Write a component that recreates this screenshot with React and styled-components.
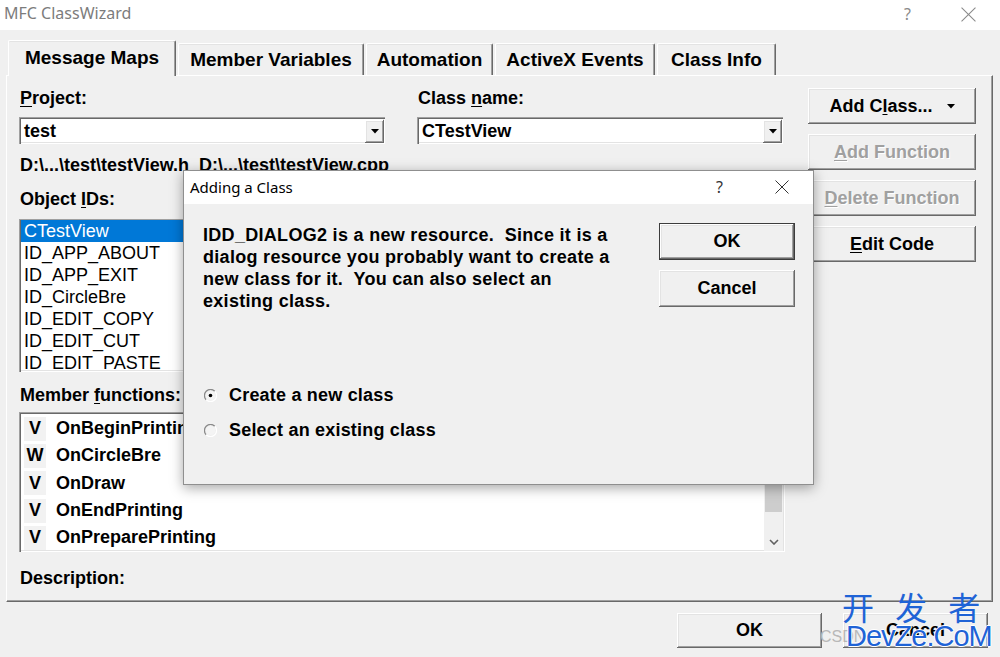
import React from "react";
import styled, { createGlobalStyle } from "styled-components";

const GlobalStyle = createGlobalStyle`
  html, body {
    margin: 0;
    padding: 0;
    background: #f0f0f0;
  }
  body {
    font-family: "Liberation Sans", Arial, sans-serif;
  }
  * {
    box-sizing: border-box;
  }
`;

const Window = styled.div`
  position: relative;
  width: 1000px;
  height: 657px;
  overflow: hidden;
  background: #f0f0f0;
  font-family: "Liberation Sans", Arial, sans-serif;
  color: #000;
`;

const TitleBar = styled.div`
  height: 30px;
  background: #fff;
  display: flex;
  align-items: flex-start;
  padding: 2px 0 0 4px;
  font-family: "Noto Sans", sans-serif;
  font-size: 16px;
  color: #7c7c7c;
`;

const Caption = styled.div`
  flex: 1;
  line-height: 22px;
`;

const CaptionButtons = styled.div`
  display: flex;
  align-items: center;
  gap: ${(p) => p.$gap}px;
  padding-right: ${(p) => p.$right}px;
  height: ${(p) => p.$height}px;
  color: ${(p) => p.$color};
  font-family: "Noto Sans", sans-serif;
  font-size: 16px;
`;

const TabStrip = styled.div`
  position: relative;
  z-index: 2;
  display: flex;
  align-items: flex-end;
  height: 46px;
  padding: 10px 0 0 8px;
`;

const Tab = styled.div`
  height: ${(p) => (p.$active ? 36 : 32)}px;
  margin-bottom: ${(p) => (p.$active ? 0 : 1)}px;
  margin-right: 2px;
  width: ${(p) => p.$width}px;
  display: flex;
  align-items: center;
  justify-content: center;
  padding-bottom: ${(p) => (p.$active ? 1 : 0)}px;
  background: #f0f0f0;
  border-top: 1px solid #fff;
  border-left: 1px solid #fff;
  border-right: 1px solid #696969;
  box-shadow: inset -1px 0 #a0a0a0, inset 0 1px #e3e3e3;
  border-radius: 2px 2px 0 0;
  font-weight: bold;
  font-size: 19px;
  white-space: nowrap;
`;

const Panel = styled.div`
  position: relative;
  z-index: 1;
  display: flex;
  gap: 23px;
  margin: -1px 7px 0 6px;
  padding: 12px 16px 13px 12px;
  border-top: 1px solid #fff;
  border-left: 1px solid #fff;
  border-right: 1px solid #696969;
  border-bottom: 1px solid #696969;
  box-shadow: inset -1px -1px #a0a0a0;
`;

const LeftSection = styled.div`
  width: 766px;
  display: flex;
  flex-direction: column;
`;

const FieldRow = styled.div`
  display: flex;
  gap: 32px;
`;

const Field = styled.div`
  width: 366px;
  display: flex;
  flex-direction: column;
`;

const Label = styled.div`
  font-weight: bold;
  font-size: 18px;
  line-height: 20px;
  min-height: 20px;
  padding-left: 1px;
  margin-top: ${(p) => p.$top || 0}px;
  margin-bottom: ${(p) => p.$bottom || 0}px;
  white-space: nowrap;
`;

const Key = styled.span`
  text-decoration: underline;
  text-underline-offset: 2px;
`;

const Combo = styled.div`
  height: 27px;
  display: flex;
  align-items: center;
  background: #fff;
  padding: 2px 1px 1px 2px;
  box-shadow: inset 1px 1px #a0a0a0, inset 2px 2px #696969, inset -1px -1px #fff,
    inset -2px -2px #e3e3e3;
`;

const ComboText = styled.div`
  flex: 1;
  padding-left: 3px;
  font-weight: bold;
  font-size: 18px;
`;

const ComboButton = styled.div`
  width: 19px;
  height: 23px;
  display: flex;
  align-items: center;
  justify-content: center;
  background: #f0f0f0;
  box-shadow: inset -1px -1px #696969, inset 1px 1px #fff, inset -2px -2px #a0a0a0,
    inset 2px 2px #e3e3e3;
`;

const PathText = styled.div`
  margin-top: 11px;
  font-weight: bold;
  font-size: 18px;
  line-height: 20px;
  padding-left: 1px;
  white-space: pre;
`;

const ListRow = styled.div`
  display: flex;
  gap: 32px;
  margin-top: 14px;
`;

const ListBox = styled.div`
  height: ${(p) => p.$height}px;
  background: #fff;
  padding: 1px 2px 1px 2px;
  overflow: hidden;
  display: flex;
  box-shadow: inset 1px 1px #a0a0a0, inset 2px 2px #696969, inset -1px -1px #fff,
    inset -2px -2px #e3e3e3;
`;

const ListItems = styled.div`
  flex: 1;
  display: flex;
  flex-direction: column;
  padding-top: ${(p) => p.$top || 0}px;
`;

const IdItem = styled.div`
  height: 22px;
  line-height: 22px;
  padding-left: 3px;
  font-size: 18px;
  white-space: nowrap;
  background: ${(p) => (p.$selected ? "#0078d7" : "transparent")};
  color: ${(p) => (p.$selected ? "#fff" : "#000")};
`;

const FuncItem = styled.div`
  height: 27.3px;
  flex-shrink: 0;
  display: flex;
  align-items: center;
  font-weight: bold;
  font-size: 18px;
  white-space: nowrap;
`;

const FuncKind = styled.span`
  width: 22px;
  height: 24px;
  margin: 0 10px 0 3px;
  display: flex;
  align-items: center;
  justify-content: center;
  background: #f2f2f2;
`;

const ScrollBar = styled.div`
  width: 19px;
  display: flex;
  flex-direction: column;
  background: #f0f0f0;
`;

const ScrollArrow = styled.div`
  height: 19px;
  display: flex;
  align-items: center;
  justify-content: center;
`;

const ScrollThumb = styled.div`
  height: 80px;
  margin: 0 1px;
  background: #cdcdcd;
`;

const ScrollTrack = styled.div`
  flex: 1;
`;

const ButtonColumn = styled.div`
  width: 168px;
  display: flex;
  flex-direction: column;
  gap: 10px;
`;

const Button = styled.div`
  width: ${(p) => p.$width || 168}px;
  height: ${(p) => p.$height || 36}px;
  display: flex;
  align-items: center;
  justify-content: center;
  gap: 14px;
  background: #f0f0f0;
  font-weight: bold;
  font-size: 18px;
  white-space: nowrap;
  color: ${(p) => (p.$disabled ? "#a0a0a0" : "#000")};
  text-shadow: ${(p) => (p.$disabled ? "1px 1px 0 #fff" : "none")};
  border: ${(p) => (p.$default ? "1px solid #3c3c3c" : "none")};
  box-shadow: inset -1px -1px #696969, inset 1px 1px #fff, inset -2px -2px #a0a0a0,
    inset 2px 2px #e3e3e3;
`;

const BottomRow = styled.div`
  display: flex;
  justify-content: flex-end;
  gap: 21px;
  margin-top: 11px;
  padding-right: 12px;
`;

const Dialog = styled.div`
  position: absolute;
  left: 183px;
  top: 170px;
  width: 631px;
  height: 315px;
  z-index: 5;
  background: #f0f0f0;
  border: 1px solid #8f8f8f;
  box-shadow: 0 3px 12px rgba(0, 0, 0, 0.35);
  display: flex;
  flex-direction: column;
`;

const DialogTitle = styled.div`
  height: 33px;
  background: #fff;
  display: flex;
  align-items: center;
  padding: 0 0 2px 6px;
  font-family: "Noto Sans", sans-serif;
  font-size: 15px;
  color: #000;
`;

const DialogBody = styled.div`
  padding: 19px 18px 0 19px;
  display: flex;
  flex-direction: column;
`;

const DialogTop = styled.div`
  display: flex;
  justify-content: space-between;
`;

const Message = styled.div`
  margin-top: 1px;
  font-weight: bold;
  font-size: 18px;
  letter-spacing: 0.3px;
  line-height: 22px;
  white-space: pre;
`;

const DialogButtons = styled.div`
  display: flex;
  flex-direction: column;
  gap: 10px;
`;

const RadioGroup = styled.div`
  margin-top: 72px;
  display: flex;
  flex-direction: column;
  gap: 13px;
`;

const Radio = styled.div`
  height: 22px;
  display: flex;
  align-items: center;
  gap: 12px;
  padding-left: 1px;
  font-weight: bold;
  font-size: 18px;
  letter-spacing: 0.2px;
`;

const Watermark = styled.div`
  position: absolute;
  left: 842px;
  top: 588px;
  width: 158px;
  z-index: 6;
  display: flex;
  flex-direction: column;
  align-items: flex-start;
  color: #1f63d6;
  white-space: pre;
  pointer-events: none;
`;

const WatermarkCjk = styled.div`
  font-family: "Noto Sans CJK SC", sans-serif;
  font-size: 32px;
  line-height: 36px;
  letter-spacing: 7px;
`;

const WatermarkLatin = styled.div`
  margin-top: -4px;
  padding-left: 4px;
  font-family: "Liberation Sans", sans-serif;
  font-size: 29px;
  line-height: 32px;
  letter-spacing: -1px;
  text-shadow: 1px 0 #fff, -1px 0 #fff, 0 1px #fff, 0 -1px #fff;
`;

const Faint = styled.div`
  position: absolute;
  left: 820px;
  top: 628px;
  z-index: 6;
  font-size: 16px;
  color: #b8b8b8;
`;

const DownTriangle = () => (
  <svg width="8" height="5" viewBox="0 0 8 5">
    <path d="M0 0 H8 L4 4.5 Z" fill="#000" />
  </svg>
);

const CloseGlyph = ({ size, color }) => (
  <svg width={size} height={size} viewBox="0 0 14 14">
    <path d="M0.5 0.5 L13.5 13.5 M13.5 0.5 L0.5 13.5" stroke={color} strokeWidth="1" />
  </svg>
);

const RadioMark = ({ checked }) => (
  <svg width="13" height="13" viewBox="0 0 13 13">
    <path d="M10.8 2.2 A6 6 0 0 0 2.2 10.8" fill="none" stroke="#8a8a8a" strokeWidth="1.3" />
    <path d="M2.2 10.8 A6 6 0 0 0 10.8 2.2" fill="none" stroke="#ffffff" strokeWidth="1.3" />
    <circle cx="6.5" cy="6.5" r="4.6" fill="#f4f4f4" />
    {checked && <circle cx="6.5" cy="6.5" r="1.8" fill="#000" />}
  </svg>
);

const Chevron = ({ up }) => (
  <svg width="10" height="6" viewBox="0 0 10 6">
    <path
      d={up ? "M1 5 L5 1 L9 5" : "M1 1 L5 5 L9 1"}
      fill="none"
      stroke="#606060"
      strokeWidth="1.6"
    />
  </svg>
);

const objectIds = [
  "CTestView",
  "ID_APP_ABOUT",
  "ID_APP_EXIT",
  "ID_CircleBre",
  "ID_EDIT_COPY",
  "ID_EDIT_CUT",
  "ID_EDIT_PASTE",
];

const functions = [
  { kind: "V", name: "OnBeginPrinting" },
  { kind: "W", name: "OnCircleBre" },
  { kind: "V", name: "OnDraw" },
  { kind: "V", name: "OnEndPrinting" },
  { kind: "V", name: "OnPreparePrinting" },
];

const tabs = [
  { label: "Message Maps", width: 168 },
  { label: "Member Variables", width: 186 },
  { label: "Automation", width: 127 },
  { label: "ActiveX Events", width: 160 },
  { label: "Class Info", width: 119 },
];

const App = () => {
  return (
    <Window>
      <GlobalStyle />
      <TitleBar>
        <Caption>MFC ClassWizard</Caption>
        <CaptionButtons $gap={50} $right={24} $height={24} $color="#8a8a8a">
          <span>?</span>
          <CloseGlyph size={15} color="#8a8a8a" />
        </CaptionButtons>
      </TitleBar>

      <TabStrip>
        {tabs.map((t, i) => (
          <Tab key={t.label} $active={i === 0} $width={t.width}>
            {t.label}
          </Tab>
        ))}
      </TabStrip>

      <Panel>
        <LeftSection>
          <FieldRow>
            <Field>
              <Label $bottom={9}>
                <Key>P</Key>roject:
              </Label>
              <Combo>
                <ComboText>test</ComboText>
                <ComboButton>
                  <DownTriangle />
                </ComboButton>
              </Combo>
            </Field>
            <Field>
              <Label $bottom={9}>
                Class <Key>n</Key>ame:
              </Label>
              <Combo>
                <ComboText>CTestView</ComboText>
                <ComboButton>
                  <DownTriangle />
                </ComboButton>
              </Combo>
            </Field>
          </FieldRow>

          <PathText>{"D:\\...\\test\\testView.h  D:\\...\\test\\testView.cpp"}</PathText>

          <ListRow>
            <Field>
              <Label $bottom={10}>
                Object <Key>I</Key>Ds:
              </Label>
              <ListBox $height={153}>
                <ListItems>
                  {objectIds.map((id, i) => (
                    <IdItem key={id} $selected={i === 0}>
                      {id}
                    </IdItem>
                  ))}
                </ListItems>
              </ListBox>
            </Field>
            <Field>
              <Label $bottom={10} />
              <ListBox $height={153} />
            </Field>
          </ListRow>

          <Label $top={13} $bottom={7}>
            Member <Key>f</Key>unctions:
          </Label>
          <ListBox $height={140}>
            <ListItems $top={2}>
              {functions.map((f) => (
                <FuncItem key={f.name}>
                  <FuncKind>{f.kind}</FuncKind>
                  {f.name}
                </FuncItem>
              ))}
            </ListItems>
            <ScrollBar>
              <ScrollArrow>
                <Chevron up />
              </ScrollArrow>
              <ScrollThumb />
              <ScrollTrack />
              <ScrollArrow>
                <Chevron />
              </ScrollArrow>
            </ScrollBar>
          </ListBox>

          <Label $top={16}>Description:</Label>
        </LeftSection>

        <ButtonColumn>
          <Button>
            <span>
              Add C<Key>l</Key>ass...
            </span>
            <DownTriangle />
          </Button>
          <Button $disabled>
            <span>
              <Key>A</Key>dd Function
            </span>
          </Button>
          <Button $disabled>
            <span>
              <Key>D</Key>elete Function
            </span>
          </Button>
          <Button>
            <span>
              <Key>E</Key>dit Code
            </span>
          </Button>
        </ButtonColumn>
      </Panel>

      <BottomRow>
        <Button $width={145} $height={35}>
          OK
        </Button>
        <Button $width={145} $height={35}>
          Cancel
        </Button>
      </BottomRow>

      <Dialog>
        <DialogTitle>
          <Caption>Adding a Class</Caption>
          <CaptionButtons $gap={52} $right={24} $height={31} $color="#333">
            <span>?</span>
            <CloseGlyph size={14} color="#333" />
          </CaptionButtons>
        </DialogTitle>
        <DialogBody>
          <DialogTop>
            <Message>
              {"IDD_DIALOG2 is a new resource.  Since it is a\n" +
                "dialog resource you probably want to create a\n" +
                "new class for it.  You can also select an\n" +
                "existing class."}
            </Message>
            <DialogButtons>
              <Button $width={136} $height={37} $default>
                OK
              </Button>
              <Button $width={136} $height={37}>
                Cancel
              </Button>
            </DialogButtons>
          </DialogTop>
          <RadioGroup>
            <Radio>
              <RadioMark checked />
              Create a new class
            </Radio>
            <Radio>
              <RadioMark />
              Select an existing class
            </Radio>
          </RadioGroup>
        </DialogBody>
      </Dialog>

      <Faint>CSDN</Faint>
      <Watermark>
        <WatermarkCjk>{"开 发 者"}</WatermarkCjk>
        <WatermarkLatin>DevZe.CoM</WatermarkLatin>
      </Watermark>
    </Window>
  );
};

export default App;
